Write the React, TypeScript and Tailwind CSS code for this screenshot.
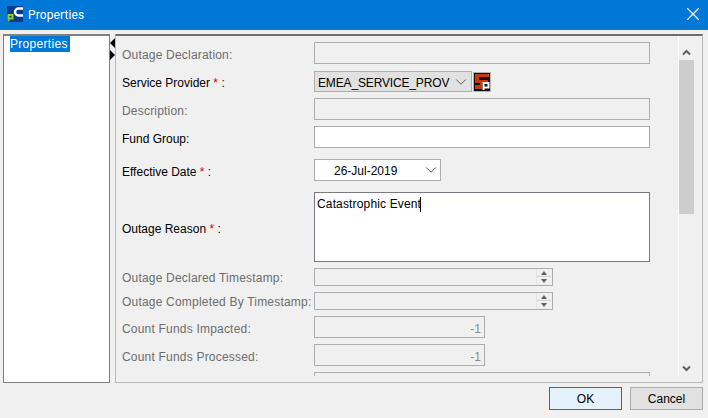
import React from "react";
import { ChevronDown, X } from "lucide-react";

const Req = () => <span className="text-[#e00000]"> * </span>;

const Row = ({ h, mt, pad = "pt-[4px]", label, disabled, children }: { h: number; mt: string; pad?: string; label: React.ReactNode; disabled?: boolean; children: React.ReactNode }) => (
  <div className={`flex items-center ${mt}`} style={{ height: h }}>
    <div className={`w-[192px] shrink-0 whitespace-nowrap ${pad} ${disabled ? "text-[#6d6d6d] tracking-[0.2px]" : "text-black"}`}>{label}</div>
    {children}
  </div>
);

const Spin = () => (
  <div className="h-[18px] w-[239px] border border-[#adadad] flex justify-end">
    <div className="w-[15px] mr-[1px] flex flex-col border-l border-[#e3e3e3]">
      <div className="h-[8px] flex items-center justify-center border-b border-[#d6d6d6]">
        <div className="w-0 h-0 border-x-[3px] border-x-transparent border-b-[4px] border-b-[#606060]" />
      </div>
      <div className="flex-1 flex items-center justify-center">
        <div className="w-0 h-0 border-x-[3px] border-x-transparent border-t-[4px] border-t-[#606060]" />
      </div>
    </div>
  </div>
);

const Logo = () => (
  <svg width="16" height="16" viewBox="0 0 16 16" className="shrink-0 -mt-[2px]">
    <rect width="16" height="16" fill="#0b3a8e" />
    <path d="M16 2.5H11.5A3.5 3.5 0 0 0 8 6A3.5 3.5 0 0 0 11.5 9.5H16" fill="none" stroke="#fff" strokeWidth="2.4" />
    <path d="M1.5 15.5V9H5.5V12.5H2.5" fill="none" stroke="#9ac81e" strokeWidth="2" />
  </svg>
);

const SpIcon = () => (
  <svg width="18" height="20" viewBox="0 0 18 20" className="shrink-0">
    <rect x="0.5" y="0.5" width="17" height="19" fill="#111" stroke="#b5b5b5" />
    <path d="M2 2H16V5H6V8H15V11H9V17H2V13H7V11H2Z" fill="#c8380c" />
    <path d="M10.5 18V11H15.5V15.5H11" fill="none" stroke="#fff" strokeWidth="2" />
  </svg>
);

export default function App() {
  return (
    <div className="w-[708px] h-[418px] bg-[#f0f0f0] flex flex-col overflow-hidden text-[12px] font-['Liberation_Sans',Arial,sans-serif]">
      {/* title bar */}
      <div className="h-[30px] bg-[#0078d7] flex items-center pl-[7px] pr-[4px] shrink-0">
        <Logo />
        <span className="ml-[5px] text-white font-['Roboto',sans-serif] text-[12px] tracking-[0.1px] -mt-[1px]">Properties</span>
        <X className="ml-auto text-white -mt-[2px]" size={22} strokeWidth={1.2} />
      </div>

      <div className="flex pl-[3px] pt-[4px] h-[350px] shrink-0">
        {/* tree */}
        <div className="w-[107px] h-[349px] bg-white border border-[#808080] border-t-2 pl-[6px]">
          <div className="w-[60px] h-[16px] bg-[#0078d7] text-white leading-[16px] tracking-[0.3px]">Properties</div>
        </div>

        {/* splitter */}
        <div className="w-[5px] flex flex-col pt-[4px] gap-[2px]">
          <div className="w-0 h-0 border-y-[5px] border-y-transparent border-r-[5px] border-r-black" />
          <div className="w-0 h-0 border-y-[5px] border-y-transparent border-l-[5px] border-l-black" />
        </div>

        {/* form panel */}
        <div className="w-[588px] h-[349px] border border-[#b9b9b9] border-t-2 border-t-[#6e6e6e] flex">
          <div className="w-[563px] h-[340px] overflow-hidden pl-[6px] pt-[6px] border-r border-white">
            <Row h={22} mt="" label="Outage Declaration:" disabled>
              <div className="h-[22px] w-[336px] border border-[#adadad]" />
            </Row>
            <Row h={21} mt="mt-[7px]" pad="pt-[2px]" label={<>Service Provider<Req />:</>}>
              <div className="h-[21px] w-[158px] border border-[#adadad] bg-[#e1e1e1] flex items-center pl-[3px] pr-[1px] text-black">
                <span className="pt-[2px] tracking-[-0.15px]">EMEA_SERVICE_PROV</span>
                <ChevronDown className="ml-auto text-[#555]" size={18} strokeWidth={1.3} />
              </div>
              <div className="ml-[1px]"><SpIcon /></div>
            </Row>
            <Row h={22} mt="mt-[6px]" label="Description:" disabled>
              <div className="h-[22px] w-[336px] border border-[#adadad]" />
            </Row>
            <Row h={22} mt="mt-[6px]" label="Fund Group:">
              <div className="h-[22px] w-[336px] border border-[#adadad] bg-white" />
            </Row>
            <Row h={22} mt="mt-[11px]" label={<>Effective Date<Req />:</>}>
              <div className="h-[22px] w-[127px] border border-[#adadad] bg-white flex items-center pl-[19px] text-black">
                <span className="pt-[2px]">26-Jul-2019</span>
                <ChevronDown className="ml-auto text-[#555]" size={18} strokeWidth={1.3} />
              </div>
            </Row>
            <Row h={70} mt="mt-[11px]" label={<>Outage Reason<Req />:</>}>
              <div className="h-[70px] w-[336px] border border-[#7a7a85] bg-white pl-[2px] pt-[4px] flex items-start text-black tracking-[0.15px]">
                <span className="leading-[14px]">Catastrophic Event</span>
                <div className="w-[1px] h-[15px] bg-black -ml-[1px]" />
              </div>
            </Row>
            <Row h={18} mt="mt-[6px]" pad="pt-[2px]" label="Outage Declared Timestamp:" disabled><Spin /></Row>
            <Row h={18} mt="mt-[6px]" pad="pt-[2px]" label="Outage Completed By Timestamp:" disabled><Spin /></Row>
            <Row h={22} mt="mt-[6px]" label="Count Funds Impacted:" disabled>
              <div className="h-[22px] w-[171px] border border-[#adadad] flex items-center justify-end pr-[3px] pt-[4px] text-[#8a8a8a]">-1</div>
            </Row>
            <Row h={22} mt="mt-[6px]" label="Count Funds Processed:" disabled>
              <div className="h-[22px] w-[171px] border border-[#adadad] flex items-center justify-end pr-[3px] pt-[4px] text-[#8a8a8a]">-1</div>
            </Row>
            <Row h={22} mt="mt-[6px]" label="" disabled>
              <div className="h-[22px] w-[336px] border border-[#adadad]" />
            </Row>
          </div>

          {/* scrollbar */}
          <div className="w-[15px] flex flex-col items-center pt-[8px] h-[340px]">
            <div className="h-[16px] flex items-center justify-center">
              <svg width="9" height="7" viewBox="0 0 9 7"><path d="M1 5.5L4.5 2L8 5.5" fill="none" stroke="#606060" strokeWidth="2" /></svg>
            </div>
            <div className="w-[15px] h-[154px] bg-[#cdcdcd]" />
            <div className="mt-auto h-[16px] flex items-center justify-center">
              <svg width="9" height="7" viewBox="0 0 9 7"><path d="M1 1.5L4.5 5L8 1.5" fill="none" stroke="#606060" strokeWidth="2" /></svg>
            </div>
          </div>
        </div>
      </div>

      {/* buttons */}
      <div className="flex justify-end gap-[8px] pr-[5px] pt-[7px]">
        <button className="w-[73px] h-[23px] bg-[#e5f1fb] border border-[#0078d7] text-black">OK</button>
        <button className="w-[73px] h-[23px] bg-[#e1e1e1] border border-[#adadad] text-black">Cancel</button>
      </div>
    </div>
  );
}
